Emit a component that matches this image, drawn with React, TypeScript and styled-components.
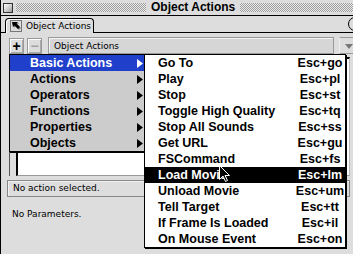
import React from "react";
import styled, { createGlobalStyle } from "styled-components";

const GlobalStyle = createGlobalStyle`
  html, body { margin: 0; padding: 0; background: #dddddd; overflow: hidden; }
  #root { width: 353px; height: 254px; }
`;

const Window = styled.div`
  position: relative;
  width: 353px;
  height: 254px;
  overflow: hidden;
  box-sizing: border-box;
  border-left: 1px solid #000;
  background: #dddddd;
  font-family: "DejaVu Sans", sans-serif;
`;

const TitleBar = styled.div`
  display: flex;
  align-items: center;
  height: 15px;
  border-bottom: 1px solid #000;
  background: #dddddd;
`;

const CloseBox = styled.div`
  flex: none;
  width: 10px;
  height: 10px;
  margin-left: 2px;
  box-sizing: border-box;
  border: 1px solid #333;
  background: linear-gradient(135deg, #ffffff 0%, #c8c8c8 60%, #999 100%);
`;

const Stripes = styled.div<{ $w?: number }>`
  height: 9px;
  margin-left: ${(p) => (p.$w ? 3 : 5)}px;
  ${(p) => (p.$w ? `width: ${p.$w}px; flex: none;` : "flex: 1;")}
  background: repeating-conic-gradient(#9c9c9c 0 25%, #ececec 0 50%) 0 0 / 2px 2px;
`;

const Title = styled.div`
  flex: none;
  margin-left: 5px;
  font: bold 12px/15px "Liberation Sans", Arial, sans-serif;
  color: #000;
`;

const TabRow = styled.div`
  display: flex;
  align-items: flex-end;
  height: 16px;
  border-bottom: 1px solid #000;
`;

const Tab = styled.div`
  display: flex;
  align-items: center;
  gap: 4px;
  height: 14px;
  margin-left: 4px;
  margin-bottom: -1px;
  padding: 0 2px 0 4px;
  border: 1px solid #000;
  border-bottom: none;
  border-radius: 4px 4px 0 0;
  background: #dddddd;
  box-shadow: inset 1px 1px 0 #ffffff;
  font-size: 9px;
  line-height: 14px;
  color: #000;
`;

const PanelMenuButton = styled.div`
  align-self: center;
  flex: none;
  width: 12px;
  height: 12px;
  margin-left: auto;
  margin-right: -9px;
  border: 1px solid #000;
  border-radius: 50%;
  background: #dddddd;
`;

const Toolbar = styled.div`
  display: flex;
  align-items: flex-start;
  height: 19px;
  padding: 4px 0 0 8px;
`;

const SquareButton = styled.div<{ $disabled?: boolean }>`
  flex: none;
  display: flex;
  align-items: center;
  justify-content: center;
  width: 15px;
  height: 16px;
  margin-top: 1px;
  margin-right: 3px;
  box-sizing: border-box;
  border: 1px solid #999;
  background: #dddddd;
  box-shadow: inset 1px 1px 0 #fff, inset -1px -1px 0 #aaa;
  font: bold 14px/14px "Liberation Sans", Arial, sans-serif;
  color: ${(p) => (p.$disabled ? "#a0a0a0" : "#000")};
`;

const TargetField = styled.div`
  flex: none;
  width: 286px;
  height: 17px;
  margin-left: 3px;
  box-sizing: border-box;
  padding: 1px 0 0 5px;
  border: 1px solid #999;
  background: #d6d6d6;
  box-shadow: inset 1px 1px 0 #f4f4f4;
  font-size: 9px;
  line-height: 15px;
  color: #000;
`;

const DropButton = styled.div`
  flex: none;
  display: flex;
  justify-content: center;
  width: 18px;
  height: 17px;
  margin-left: 5px;
  box-sizing: border-box;
  padding-top: 6px;
  border-left: 1px solid #eee;
  border-top: 1px solid #999;
  border-bottom: 1px solid #999;
  background: #dddddd;
`;

const ListFrame = styled.div`
  display: flex;
  height: 120px;
  margin: 0 3px 0 8px;
  padding-left: 6px;
  border-left: 1px solid #555;
`;

const ScriptList = styled.div`
  flex: 1;
  margin-top: 1px;
  background: #fff;
  border-top: 2px solid #000;
  border-left: 2px solid #000;
  border-right: 1px solid #bbb;
  border-bottom: 1px solid #999;
`;

const StatusBox = styled.div`
  height: 17px;
  margin: 4px 3px 0 6px;
  box-sizing: border-box;
  padding-left: 5px;
  border: 1px solid #888;
  box-shadow: inset 1px 1px 0 #f2f2f2;
  font-size: 9px;
  line-height: 15px;
  color: #000;
`;

const Params = styled.div`
  margin-top: 11px;
  padding-left: 11px;
  font-size: 9px;
  line-height: 12px;
  color: #000;
`;

const MenuLayer = styled.div`
  position: absolute;
  top: 54px;
  left: 8px;
  display: flex;
  align-items: flex-start;
`;

const MainMenu = styled.div`
  width: 136px;
  box-sizing: border-box;
  border: 1px solid #000;
  background: #cccccc;
  box-shadow: 1px 1px 0 #000;
`;

const MainItem = styled.div<{ $active?: boolean }>`
  display: flex;
  align-items: center;
  height: 16px;
  padding: 0 1px 0 20px;
  background: ${(p) => (p.$active ? "#2040cc" : "transparent")};
  color: ${(p) => (p.$active ? "#fff" : "#000")};
  font: bold 12.5px/16px "Liberation Sans", Arial, sans-serif;
`;

const ItemLabel = styled.span`
  flex: 1;
  white-space: nowrap;
`;

const SubMenu = styled.div`
  width: 202px;
  margin-left: -1px;
  box-sizing: border-box;
  border: 1px solid #000;
  background: #fff;
  box-shadow: 1px 1px 0 #000;
`;

const SubItem = styled.div<{ $active?: boolean }>`
  display: flex;
  align-items: center;
  height: 16px;
  padding-left: 13px;
  background: ${(p) => (p.$active ? "#000" : "transparent")};
  color: ${(p) => (p.$active ? "#fff" : "#000")};
  font: bold 12.5px/16px "Liberation Sans", Arial, sans-serif;
`;

const Shortcut = styled.span`
  flex: none;
  width: 50px;
  text-align: center;
  white-space: nowrap;
`;

const Cursor = styled.svg`
  position: absolute;
  left: 218px;
  top: 165px;
`;

const Arrow = ({ color }: { color: string }) => (
  <svg width="6" height="9" viewBox="0 0 6 9">
    <polygon points="0,0 6,4.5 0,9" fill={color} />
  </svg>
);

const TabIcon = () => (
  <svg width="12" height="12" viewBox="0 0 12 12">
    <rect x="0.5" y="0.5" width="11" height="11" fill="none" stroke="#777" />
    <polygon points="2,2 8,2 6.5,3.5 10,7 8,9 4.5,5.5 3,7" fill="#888" transform="translate(1,1)" />
    <polygon points="2,2 8,2 6.5,3.5 10,7 8,9 4.5,5.5 3,7" fill="#000" />
  </svg>
);

const mainItems = ["Basic Actions", "Actions", "Operators", "Functions", "Properties", "Objects"];

const subItems: [string, string][] = [
  ["Go To", "Esc+go"],
  ["Play", "Esc+pl"],
  ["Stop", "Esc+st"],
  ["Toggle High Quality", "Esc+tq"],
  ["Stop All Sounds", "Esc+ss"],
  ["Get URL", "Esc+gu"],
  ["FSCommand", "Esc+fs"],
  ["Load Movie", "Esc+lm"],
  ["Unload Movie", "Esc+um"],
  ["Tell Target", "Esc+tt"],
  ["If Frame Is Loaded", "Esc+il"],
  ["On Mouse Event", "Esc+on"],
];

export default function App() {
  return (
    <>
      <GlobalStyle />
      <Window>
        <TitleBar>
          <CloseBox />
          <Stripes $w={130} />
          <Title>Object Actions</Title>
          <Stripes />
        </TitleBar>
        <TabRow>
          <Tab>
            <TabIcon />
            <span>Object Actions</span>
          </Tab>
          <PanelMenuButton />
        </TabRow>
        <Toolbar>
          <SquareButton>+</SquareButton>
          <SquareButton $disabled>−</SquareButton>
          <TargetField>Object Actions</TargetField>
          <DropButton>
            <svg width="8" height="5" viewBox="0 0 8 5">
              <polygon points="0,0 8,0 4,5" fill="#777" />
            </svg>
          </DropButton>
        </Toolbar>
        <ListFrame>
          <ScriptList />
        </ListFrame>
        <StatusBox>No action selected.</StatusBox>
        <Params>No Parameters.</Params>

        <MenuLayer>
          <MainMenu>
            {mainItems.map((m, i) => (
              <MainItem key={m} $active={i === 0}>
                <ItemLabel>{m}</ItemLabel>
                <Arrow color={i === 0 ? "#fff" : "#000"} />
              </MainItem>
            ))}
          </MainMenu>
          <SubMenu>
            {subItems.map(([label, key]) => (
              <SubItem key={label} $active={label === "Load Movie"}>
                <ItemLabel>{label}</ItemLabel>
                <Shortcut>{key}</Shortcut>
              </SubItem>
            ))}
          </SubMenu>
        </MenuLayer>
        <Cursor width="12" height="18" viewBox="0 0 12 18">
          <path d="M0.5 0.5 L0.5 14.5 L4 11 L6.5 16.5 L8.5 15.5 L6 10.5 L10.5 10.5 Z" fill="#000" stroke="#fff" strokeWidth="1" />
        </Cursor>
      </Window>
    </>
  );
}
